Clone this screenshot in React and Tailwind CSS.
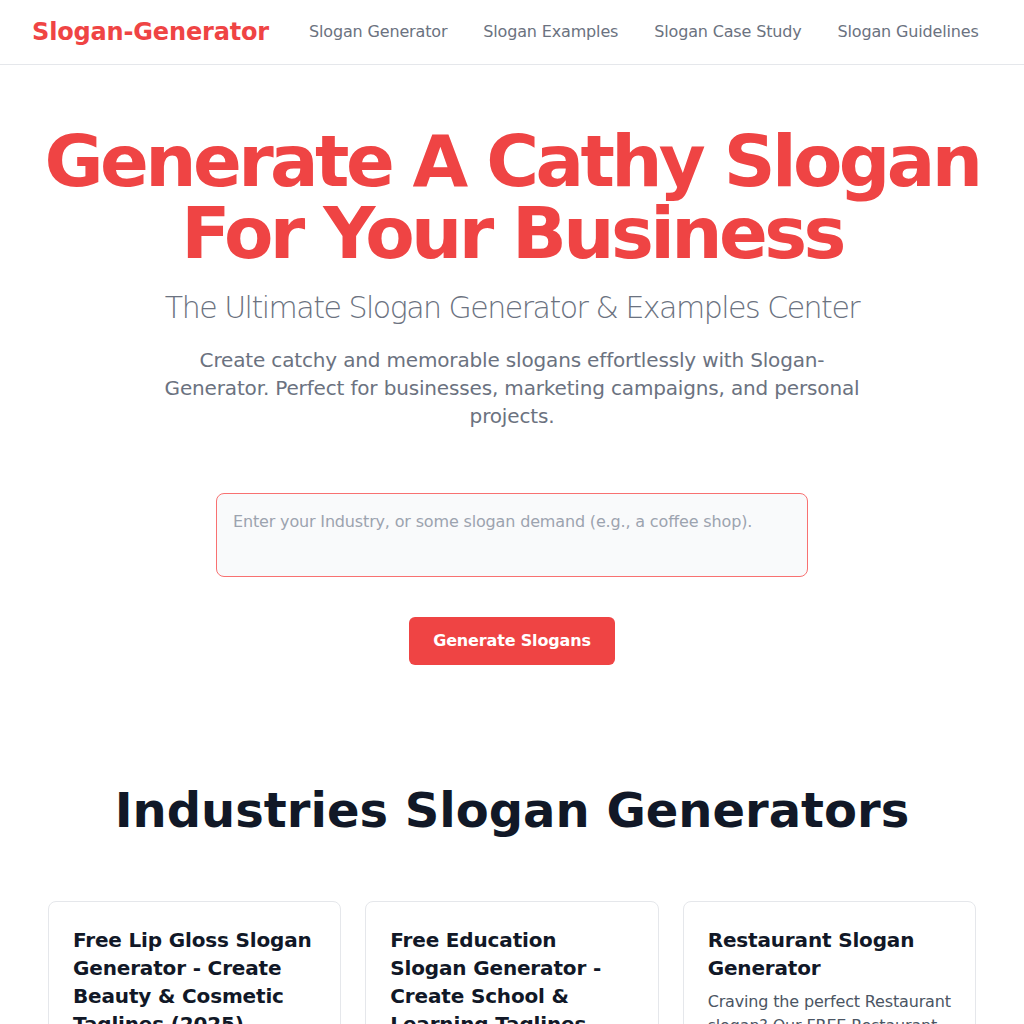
const navLinks = ['Slogan Generator', 'Slogan Examples', 'Slogan Case Study', 'Slogan Guidelines'];

const cards = [
  {
    title: 'Free Lip Gloss Slogan Generator - Create Beauty & Cosmetic Taglines (2025)',
    desc: 'Looking for the perfect lip gloss slogan? Our FREE generator creates catchy taglines in seconds.',
  },
  {
    title: 'Free Education Slogan Generator - Create School & Learning Taglines',
    desc: 'Create inspiring education slogans for schools, tutoring and learning programs.',
  },
  {
    title: 'Restaurant Slogan Generator',
    desc: 'Craving the perfect Restaurant slogan? Our FREE Restaurant Slogan Generator serves up catchy taglines.',
  },
];

export default function App() {
  return (
    <div className="min-h-screen bg-white font-['DejaVu_Sans',sans-serif] tracking-[-0.01em]">
      <header className="flex items-center h-[65px] px-8 border-b border-[#e5e7eb]">
        <a href="#" className="text-2xl font-bold text-[#ef4444]">Slogan-Generator</a>
        <nav className="flex items-center gap-9 ml-10">
          {navLinks.map((link) => (
            <a key={link} href="#" className="text-base text-[#6b7280]">
              {link}
            </a>
          ))}
        </nav>
      </header>

      <section className="flex flex-col items-center px-8 pt-[60px] pb-10 text-center">
        <h1 className="text-7xl font-bold leading-none tracking-tighter text-[#ef4444]">
          Generate A Cathy Slogan
          <br />
          For Your Business
        </h1>
        <h2 className="mt-[21px] text-3xl font-light tracking-tighter text-[#6b7280]">
          The Ultimate Slogan Generator &amp; Examples Center
        </h2>
        <p className="max-w-[720px] mt-5 text-xl leading-7 text-[#6b7280]">
          Create catchy and memorable slogans effortlessly with Slogan-Generator. Perfect for businesses, marketing campaigns, and personal projects.
        </p>

        <textarea
          placeholder="Enter your Industry, or some slogan demand (e.g., a coffee shop)."
          className="w-[592px] h-[84px] mt-[63px] px-4 py-4 text-base tracking-[-0.01em] border border-[#f87171] rounded-lg bg-[#f9fafb] resize-none outline-none placeholder:text-[#9ca3af]"
        />

        <button className="px-6 py-3 mt-10 text-base font-bold text-white bg-[#ef4444] rounded-md">
          Generate Slogans
        </button>
      </section>

      <section className="px-12 pt-[81px]">
        <h2 className="text-5xl font-bold tracking-normal text-center text-[#111827]">Industries Slogan Generators</h2>
        <div className="grid grid-cols-3 gap-6 mt-[67px]">
          {cards.map((card) => (
            <div key={card.title} className="p-6 border border-[#e5e7eb] rounded-lg">
              <h3 className="text-xl font-bold leading-7 text-[#111827]">{card.title}</h3>
              <p className="mt-2 text-base text-[#4b5563]">{card.desc}</p>
            </div>
          ))}
        </div>
      </section>
    </div>
  );
}
